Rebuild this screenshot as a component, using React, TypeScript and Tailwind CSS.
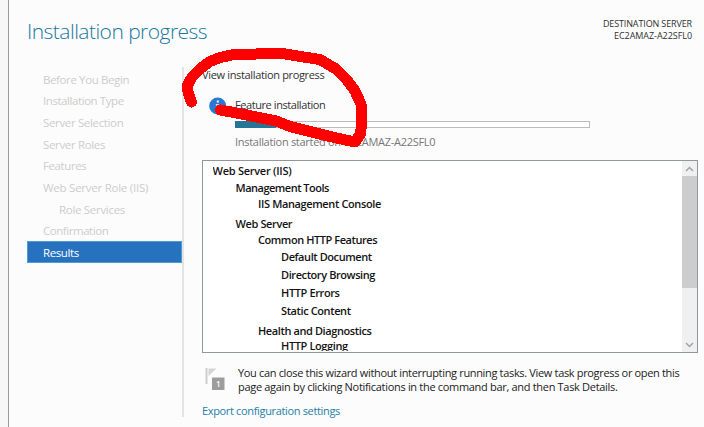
type Item = { label: string; className: string };

const steps: Item[] = [
  { label: "Before You Begin", className: "pl-4 tracking-[-0.39px]" },
  { label: "Installation Type", className: "pl-4 tracking-[-0.43px]" },
  { label: "Server Selection", className: "pl-4 tracking-[-0.35px]" },
  { label: "Server Roles", className: "pl-4 tracking-[-0.35px]" },
  { label: "Features", className: "pl-4 tracking-[-0.4px]" },
  { label: "Web Server Role (IIS)", className: "pl-4 tracking-[-0.25px]" },
  { label: "Role Services", className: "pl-8 tracking-[-0.3px]" },
  { label: "Confirmation", className: "pl-4 tracking-[-0.45px]" },
];

const features: Item[] = [
  { label: "Web Server (IIS)", className: "h-[17px] tracking-[-0.26px]" },
  { label: "Management Tools", className: "h-4 pl-[23px] tracking-[-0.5px]" },
  { label: "IIS Management Console", className: "h-5 pl-[45.5px] tracking-[-0.37px]" },
  { label: "Web Server", className: "h-4 pl-[23px] tracking-[-0.38px]" },
  { label: "Common HTTP Features", className: "h-[17px] pl-[45.5px] tracking-[-0.44px]" },
  { label: "Default Document", className: "h-[18px] pl-[68.5px] tracking-[-0.42px]" },
  { label: "Directory Browsing", className: "h-[18px] pl-[68.5px] tracking-[-0.41px]" },
  { label: "HTTP Errors", className: "h-[18px] pl-[68.5px] tracking-[-0.38px]" },
  { label: "Static Content", className: "h-5 pl-[68.5px] tracking-[-0.4px]" },
  { label: "Health and Diagnostics", className: "h-[15px] pl-[45.5px] tracking-[-0.4px]" },
  { label: "HTTP Logging", className: "h-[17px] pl-[68.5px] tracking-[-0.38px]" },
];

function Chevron({ d }: { d: string }) {
  return (
    <svg width="9" height="6" viewBox="0 0 9 6" fill="none" stroke="#a3a3a3" strokeWidth="1.5">
      <path d={d} />
    </svg>
  );
}

function Sidebar() {
  return (
    <nav className="flex w-[155px] flex-col pt-[1.6px] text-[11.5px]">
      {steps.map((s) => (
        <div key={s.label} className={`h-[21.7px] leading-[22px] text-[#cdcdcd] ${s.className}`}>
          {s.label}
        </div>
      ))}
      <div className="-mt-[1.2px] h-[22px] border border-[#4f9bd4] bg-[#2672be] pl-[15px] leading-[22px] tracking-[-0.4px] text-white">
        Results
      </div>
    </nav>
  );
}

function FeatureList() {
  return (
    <div className="mt-[9px] flex h-[193px] w-[496px] overflow-hidden border border-[#92979f] bg-white">
      <div className="flex-1 overflow-hidden pt-px pl-[9.5px] text-[11px] font-semibold text-[#141414]">
        <div className="h-[189px] overflow-hidden">
          {features.map((f) => (
            <div key={f.label} className={`leading-[17px] ${f.className}`}>
              {f.label}
            </div>
          ))}
        </div>
      </div>
      <div className="flex w-[15px] flex-col bg-[#f0f0f0]">
        <div className="flex h-[15px] items-center justify-center">
          <Chevron d="M1 5 4.5 1.5 8 5" />
        </div>
        <div className="h-[112px] bg-[#cdcdcd]" />
        <div className="mt-auto flex h-[15px] items-center justify-center">
          <Chevron d="M1 1 4.5 4.5 8 1" />
        </div>
      </div>
    </div>
  );
}

export default function App() {
  return (
    <div className="relative flex h-[427px] w-[704px] overflow-hidden bg-[#fcfcfc] font-['Open_Sans','Noto_Sans',sans-serif] whitespace-nowrap">
      <div className="w-[9px] shrink-0 border-r border-[#999999] bg-[#f7f7f7]" />
      <div className="flex flex-1 flex-col pl-[18px]">
        <header className="flex h-[67px] justify-between pr-3">
          <h1 className="pt-4 text-[21px] leading-[30px] font-light tracking-[-0.54px] text-[#2078a0]">
            Installation progress
          </h1>
          <div className="pt-[18px] text-right text-[9px] leading-3 text-[#303030]">
            <div className="tracking-[-0.13px]">DESTINATION SERVER</div>
            <div className="tracking-[-0.05px]">EC2AMAZ-A22SFL0</div>
          </div>
        </header>
        <div className="flex flex-1">
          <Sidebar />
          <div className="h-[350px] w-[2px] bg-[#e4e4e4]" />
          <main className="flex flex-col pl-[18px] text-[11px]">
            <div className="h-[30px] leading-4 tracking-[-0.34px] text-[#333333]">
              View installation progress
            </div>
            <div className="flex h-[53px]">
              <svg className="ml-[7px]" width="18" height="18" viewBox="0 0 18 18">
                <circle cx="8.700" cy="9" r="8.500" fill="#2878d4" />
                <path d="M7.800 3.500h2v2h-2zM6.800 7.300h3V13h-2V8.600h-1z" fill="#fff" />
              </svg>
              <div className="ml-2 flex flex-col">
                <div className="h-6 leading-4 tracking-[-0.42px] text-[#333333]">
                  Feature installation
                </div>
                <div className="h-[7px] w-[355px] border border-[#bcbcbc] bg-white">
                  <div className="-mt-px -ml-px h-[7px] w-[41px] bg-[#267596]" />
                </div>
                <div className="mt-[6px] leading-4 tracking-[-0.29px] text-[#777777]">
                  Installation started on EC2AMAZ-A22SFL0
                </div>
              </div>
            </div>
            <div className="mt-[1px] w-[496px] self-start">
              <FeatureList />
            </div>
            <div className="mt-[12px] flex">
              <svg className="mt-[2px] ml-[3px]" width="22" height="26" viewBox="0 0 22 26">
                <path d="M1.500 1v16" stroke="#cfcfcf" strokeWidth="2" />
                <path d="M3.500 1.500H11.500L3.500 9z" fill="#d4d4d4" />
                <rect x="7" y="10.500" width="12.500" height="12.500" fill="#9d9d9d" />
                <text
                  x="13.2"
                  y="19.8"
                  textAnchor="middle"
                  className="fill-white font-['Open_Sans',sans-serif] text-[8px] font-semibold"
                >
                  1
                </text>
              </svg>
              <div className="ml-[11px] pt-px leading-[14px] text-[#222222]">
                <div className="tracking-[-0.335px]">
                  You can close this wizard without interrupting running tasks. View task progress or open this
                </div>
                <div className="tracking-[-0.31px]">
                  page again by clicking Notifications in the command bar, and then Task Details.
                </div>
              </div>
            </div>
            <div className="mt-[9px] leading-4 tracking-[-0.34px] text-[#2580a3]">
              Export configuration settings
            </div>
          </main>
        </div>
      </div>
      <svg
        className="absolute top-0 left-0"
        width="704"
        height="427"
        fill="none"
        stroke="#fe0000"
        strokeWidth="11"
        strokeLinecap="round"
        strokeLinejoin="round"
        shapeRendering="crispEdges"
      >
        <path d="M191.500 102 188 92 187.500 85 192 77 200 69 209 62 220 57.500 234 54.500 256 54 280 53 297 56 320 59.500 336 69 347 80 355 91 361 104 361.500 124 360.500 134 355 142 348 140.500 330 136.500 290 126.500 276 121 247 115 220.500 110" />
      </svg>
    </div>
  );
}
